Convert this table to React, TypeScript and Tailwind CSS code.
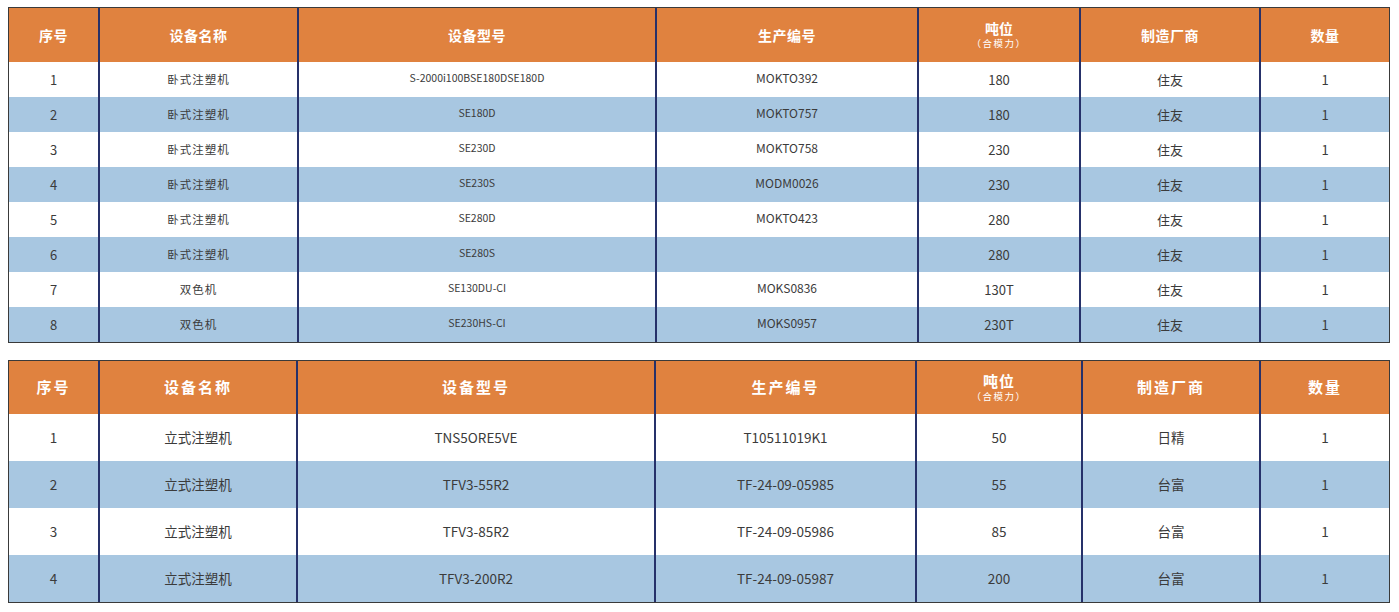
import React from 'react';

const font = { fontFamily: '"Noto Sans CJK SC", "Noto Sans", sans-serif' };

type Row = [string, string, string, string, string, string, string];

const rowsA: Row[] = [
  ['1', '卧式注塑机', 'S-2000i100BSE180DSE180D', 'MOKTO392', '180', '住友', '1'],
  ['2', '卧式注塑机', 'SE180D', 'MOKTO757', '180', '住友', '1'],
  ['3', '卧式注塑机', 'SE230D', 'MOKTO758', '230', '住友', '1'],
  ['4', '卧式注塑机', 'SE230S', 'MODM0026', '230', '住友', '1'],
  ['5', '卧式注塑机', 'SE280D', 'MOKTO423', '280', '住友', '1'],
  ['6', '卧式注塑机', 'SE280S', '', '280', '住友', '1'],
  ['7', '双色机', 'SE130DU-CI', 'MOKS0836', '130T', '住友', '1'],
  ['8', '双色机', 'SE230HS-CI', 'MOKS0957', '230T', '住友', '1'],
];

const rowsB: Row[] = [
  ['1', '立式注塑机', 'TNS5ORE5VE', 'T10511019K1', '50', '日精', '1'],
  ['2', '立式注塑机', 'TFV3-55R2', 'TF-24-09-05985', '55', '台富', '1'],
  ['3', '立式注塑机', 'TFV3-85R2', 'TF-24-09-05986', '85', '台富', '1'],
  ['4', '立式注塑机', 'TFV3-200R2', 'TF-24-09-05987', '200', '台富', '1'],
];

const headers = ['序号', '设备名称', '设备型号', '生产编号', '吨位', '制造厂商', '数量'];

function Table({
  rows,
  widths,
  headH,
  rowH,
  big,
}: {
  rows: Row[];
  widths: string[];
  headH: string;
  rowH: string;
  big: boolean;
}) {
  const cell = (i: number) =>
    `${widths[i]} shrink-0 flex items-center justify-center ${i > 0 ? 'border-l-2 border-[#26316a]' : ''}`;
  const bodySize = (i: number) => {
    if (big) return 'text-[13.5px]';
    if (i === 1) return 'text-[11.5px] tracking-[1px]';
    if (i === 2) return 'text-[10.5px]';
    if (i === 3) return 'text-[12px]';
    return 'text-[13px]';
  };
  return (
    <div className="w-[1382px] border border-[#3a3a3a]">
      <div className={`flex ${headH} bg-[#e0823f] text-white`}>
        {headers.map((h, i) => (
          <div key={h} className={cell(i)}>
            {i === 4 ? (
              <div className="flex flex-col items-center leading-none">
                <span className={`font-bold ${big ? 'text-[15px] tracking-[1px]' : 'text-[14px]'}`}>{h}</span>
                <span className="mt-[4px] text-[9.5px] tracking-[1.5px]">（合模力）</span>
              </div>
            ) : (
              <span className={`font-bold ${big ? 'text-[15px] tracking-[2px]' : 'text-[14px] tracking-[0.5px]'}`}>{h}</span>
            )}
          </div>
        ))}
      </div>
      {rows.map((r, ri) => (
        <div key={ri} className={`flex ${rowH} ${ri % 2 === 1 ? 'bg-[#a8c7e1]' : 'bg-white'} text-[#3b3b3b]`}>
          {r.map((c, i) => (
            <div key={i} className={cell(i)}>
              <span className={`${bodySize(i)} ${big ? '' : i === 2 || i === 3 ? '-mt-[4px]' : 'mt-[1px]'}`}>{c}</span>
            </div>
          ))}
        </div>
      ))}
    </div>
  );
}

export default function App() {
  return (
    <div className="w-[1399px] h-[612px] bg-white pl-[8px] pt-[7px]" style={font}>
      <Table
        rows={rowsA}
        widths={['w-[89px]', 'w-[199px]', 'w-[358px]', 'w-[262px]', 'w-[162px]', 'w-[180px]', 'w-[130px]']}
        headH="h-[54px]"
        rowH="h-[35px]"
        big={false}
      />
      <div className="h-[17px]" />
      <Table
        rows={rowsB}
        widths={['w-[89px]', 'w-[198px]', 'w-[358px]', 'w-[261px]', 'w-[166px]', 'w-[178px]', 'w-[130px]']}
        headH="h-[53px]"
        rowH="h-[47px]"
        big={true}
      />
    </div>
  );
}
